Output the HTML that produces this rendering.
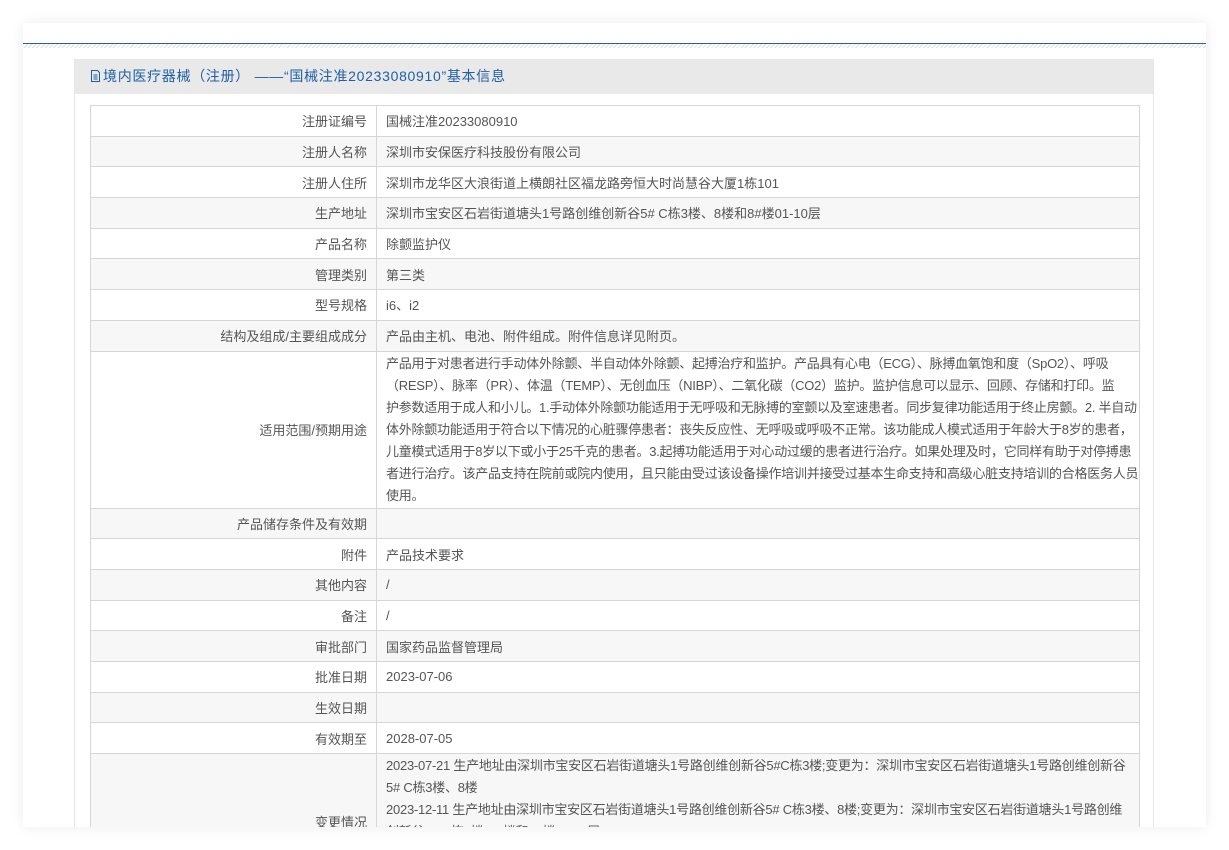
<!DOCTYPE html>
<html><head><meta charset="utf-8">
<style>
html,body{margin:0;padding:0;background:#fff;width:1229px;height:850px;overflow:hidden;}
body{font-family:"Liberation Sans","Noto Sans CJK SC",sans-serif;font-size:13px;color:#555;}
.card{position:absolute;left:23px;top:23px;width:1183px;height:804px;background:#fff;box-shadow:0 0 12px rgba(0,0,0,0.08);overflow:hidden;}
.bl{position:absolute;left:0;top:20px;width:100%;height:1px;background:#2a5fa8;}
.hatch{position:absolute;left:0;top:21px;width:100%;height:4px;background:repeating-linear-gradient(135deg,#ddd 0 1px,#fff 1px 3px);}
.box{position:absolute;left:51px;top:36px;width:1078px;height:800px;border-left:1px solid #e6e6e6;border-right:1px solid #e6e6e6;}
.hd{height:35px;background:#e9e9e9;color:#1e5fa8;font-size:14px;letter-spacing:0.7px;line-height:35px;padding-left:15px;white-space:nowrap;}
table{position:absolute;left:15px;top:46px;width:1050px;border-collapse:collapse;table-layout:fixed;}
td{border:1px solid #d6d6d6;height:30.7px;padding:0 9px;vertical-align:middle;white-space:nowrap;overflow:hidden;box-sizing:border-box;}
td.l{width:286px;text-align:right;}
tr:nth-child(even) td{background:#f7f7f7;}
.tall td.v{line-height:22px;padding-top:1px;padding-bottom:1px;letter-spacing:-0.25px;}
.last td.v{padding-bottom:46px;}
</style></head><body>
<div class="card">
<div class="bl"></div><div class="hatch"></div>
<div class="box">
<div class="hd"><svg width="11" height="12" viewBox="0 0 11 12" style="vertical-align:-1px;margin-right:2px"><path d="M1.5 .5h6l2 2v9h-8z M3.5 5h4 M3.5 7h4 M3.5 9h4" fill="none" stroke="#1e5fa8" stroke-width="1"/></svg>境内医疗器械（注册） ——“国械注准20233080910”基本信息</div>
<table>
<tr><td class="l">注册证编号</td><td>国械注准20233080910</td></tr>
<tr><td class="l">注册人名称</td><td>深圳市安保医疗科技股份有限公司</td></tr>
<tr><td class="l">注册人住所</td><td>深圳市龙华区大浪街道上横朗社区福龙路旁恒大时尚慧谷大厦1栋101</td></tr>
<tr><td class="l">生产地址</td><td>深圳市宝安区石岩街道塘头1号路创维创新谷5# C栋3楼、8楼和8#楼01-10层</td></tr>
<tr><td class="l">产品名称</td><td>除颤监护仪</td></tr>
<tr><td class="l">管理类别</td><td>第三类</td></tr>
<tr><td class="l">型号规格</td><td>i6、i2</td></tr>
<tr><td class="l">结构及组成/主要组成成分</td><td>产品由主机、电池、附件组成。附件信息详见附页。</td></tr>
<tr class="tall"><td class="l">适用范围/预期用途</td><td class="v">产品用于对患者进行手动体外除颤、半自动体外除颤、起搏治疗和监护。产品具有心电（ECG）、脉搏血氧饱和度（SpO2）、呼吸<br>（RESP）、脉率（PR）、体温（TEMP）、无创血压（NIBP）、二氧化碳（CO2）监护。监护信息可以显示、回顾、存储和打印。监<br>护参数适用于成人和小儿。1.手动体外除颤功能适用于无呼吸和无脉搏的室颤以及室速患者。同步复律功能适用于终止房颤。2. 半自动<br>体外除颤功能适用于符合以下情况的心脏骤停患者：丧失反应性、无呼吸或呼吸不正常。该功能成人模式适用于年龄大于8岁的患者，<br>儿童模式适用于8岁以下或小于25千克的患者。3.起搏功能适用于对心动过缓的患者进行治疗。如果处理及时，它同样有助于对停搏患<br>者进行治疗。该产品支持在院前或院内使用，且只能由受过该设备操作培训并接受过基本生命支持和高级心脏支持培训的合格医务人员<br>使用。</td></tr>
<tr><td class="l">产品储存条件及有效期</td><td></td></tr>
<tr><td class="l">附件</td><td>产品技术要求</td></tr>
<tr><td class="l">其他内容</td><td>/</td></tr>
<tr><td class="l">备注</td><td>/</td></tr>
<tr><td class="l">审批部门</td><td>国家药品监督管理局</td></tr>
<tr><td class="l">批准日期</td><td>2023-07-06</td></tr>
<tr><td class="l">生效日期</td><td></td></tr>
<tr><td class="l">有效期至</td><td>2028-07-05</td></tr>
<tr class="tall last"><td class="l">变更情况</td><td class="v">2023-07-21 生产地址由深圳市宝安区石岩街道塘头1号路创维创新谷5#C栋3楼;变更为：深圳市宝安区石岩街道塘头1号路创维创新谷<br>5# C栋3楼、8楼<br>2023-12-11 生产地址由深圳市宝安区石岩街道塘头1号路创维创新谷5# C栋3楼、8楼;变更为：深圳市宝安区石岩街道塘头1号路创维<br>创新谷5# C栋3楼、8楼和8#楼01-10层</td></tr>
</table>
</div>
</div>
</body></html>
